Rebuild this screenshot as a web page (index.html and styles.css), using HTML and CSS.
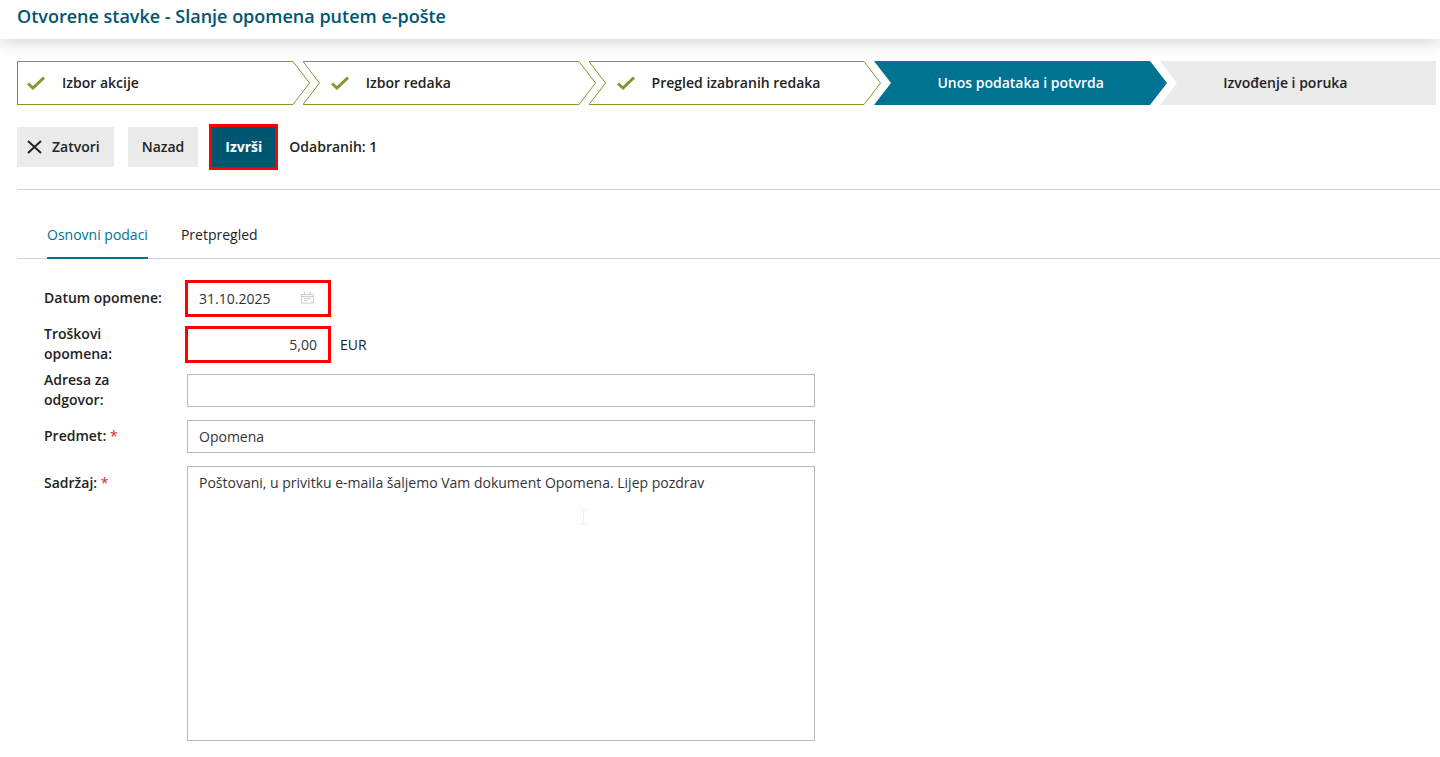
FILE: index.html
```html
<!DOCTYPE html>
<html lang="hr">
<head>
  <meta charset="UTF-8" />
  <meta name="viewport" content="width=device-width, initial-scale=1" />
  <title>Otvorene stavke - Slanje opomena putem e-pošte</title>
  <link rel="stylesheet" href="styles.css">
</head>
<body>

  <header class="page-header">
    <h1>Otvorene stavke - Slanje opomena putem e-pošte</h1>
  </header>

  <main class="page">
    <!-- Wizard steps -->
    <ol class="steps">
      <li class="step done first">
        <svg class="check" width="20" height="16" viewBox="0 0 20 16"><path d="M2 8.500l5 4.500L18 2.500" /></svg>
        <span>Izbor akcije</span>
        <svg class="tip" width="18" height="44" viewBox="0 0 18 44"><path d="M0 .5L16.500 22L0 43.500" /></svg>
      </li>
      <li class="step done">
        <svg class="notch" width="18" height="44" viewBox="0 0 18 44"><path d="M0 .5L16.500 22L0 43.500" /></svg>
        <svg class="check" width="20" height="16" viewBox="0 0 20 16"><path d="M2 8.500l5 4.500L18 2.500" /></svg>
        <span>Izbor redaka</span>
        <svg class="tip" width="18" height="44" viewBox="0 0 18 44"><path d="M0 .5L16.500 22L0 43.500" /></svg>
      </li>
      <li class="step done">
        <svg class="notch" width="18" height="44" viewBox="0 0 18 44"><path d="M0 .5L16.500 22L0 43.500" /></svg>
        <svg class="check" width="20" height="16" viewBox="0 0 20 16"><path d="M2 8.500l5 4.500L18 2.500" /></svg>
        <span>Pregled izabranih redaka</span>
        <svg class="tip" width="18" height="44" viewBox="0 0 18 44"><path d="M0 .5L16.500 22L0 43.500" /></svg>
      </li>
      <li class="step current" aria-current="step">
        <svg class="notch" width="18" height="44" viewBox="0 0 18 44"><path d="M0 0L17 22L0 44z" /></svg>
        <span>Unos podataka i potvrda</span>
        <svg class="tip" width="18" height="44" viewBox="0 0 18 44"><path d="M0 0L17 22L0 44z" /></svg>
      </li>
      <li class="step next">
        <svg class="notch" width="18" height="44" viewBox="0 0 18 44"><path d="M0 0L17 22L0 44z" /></svg>
        <span>Izvođenje i poruka</span>
      </li>
    </ol>

    <!-- Buttons -->
    <div class="toolbar">
      <button class="btn btn-close" type="button">
        <svg width="15" height="14" viewBox="0 0 15 14"><path d="M1 1l13 12M14 1L1 13" /></svg>
        Zatvori
      </button>
      <button class="btn" type="button">Nazad</button>
      <button class="btn btn-primary marked" type="submit" form="reminder">Izvrši</button>
      <span class="selected">Odabranih: 1</span>
    </div>

    <!-- Tabs -->
    <nav class="tabs">
      <a class="tab active" href="#reminder">Osnovni podaci</a>
      <a class="tab" href="#preview">Pretpregled</a>
    </nav>

    <form class="form" id="reminder">
      <label for="date">Datum opomene:</label>
      <div class="field">
        <div class="date-box">
          <input class="short marked" id="date" type="text" value="31.10.2025">
          <svg class="calendar" width="13" height="12" viewBox="0 0 13 12"><path d="M.5 2.500h12v8.500H.5zM.5 4.500h12M3.500 0v3M9.500 0v3M3 6.500h7M3 8.500h4" /></svg>
        </div>
      </div>

      <label for="costs">Troškovi opomena:</label>
      <div class="field">
        <input class="short amount marked" id="costs" type="text" value="5,00">
        <span>EUR</span>
      </div>

      <label for="reply">Adresa za odgovor:</label>
      <div class="field">
        <input id="reply" type="text">
      </div>

      <label for="subject">Predmet: <span class="required">*</span></label>
      <div class="field">
        <input id="subject" type="text" value="Opomena">
      </div>

      <label class="top" for="message">Sadržaj: <span class="required">*</span></label>
      <div class="field">
        <textarea id="message">Poštovani, u privitku e-maila šaljemo Vam dokument Opomena. Lijep pozdrav</textarea>
        <svg class="pointer" width="7" height="16" viewBox="0 0 7 16"><path d="M0 .5h3M4 .5h3M3.500 1v14M0 15.500h3M4 15.500h3" /></svg>
      </div>
    </form>
  </main>

</body>
</html>
```

FILE: styles.css
```css
/* Basic reset */
* {
  margin: 0;
  padding: 0;
  box-sizing: border-box;
}

body {
  font-family: "Open Sans", "Noto Sans", sans-serif;
  font-size: 14px;
  line-height: 20px;
  color: #222;
  background: #fff;
}

svg {
  display: block;
  flex: none;
  fill: none;
}

.page-header {
  height: 39px;
  padding: 4px 17px;
  box-shadow: 0 4px 16px rgba(0, 0, 0, 0.16);
}

.page-header h1 {
  font-size: 18px;
  line-height: 24px;
  font-weight: 600;
  color: #005670;
}

.page {
  padding: 22px 0 16px 17px;
}

/* Wizard steps */
.steps {
  display: grid;
  grid-template-columns: repeat(5, minmax(0, 1fr));
  gap: 10px;
  margin-right: 4px;
  list-style: none;
}

.step {
  position: relative;
  display: flex;
  align-items: center;
  height: 44px;
  padding-left: 63px;
  font-weight: 600;
}

.tip,
.notch {
  position: absolute;
  top: 0;
  z-index: 1;
}

.tip {
  left: 100%;
}

.notch {
  left: 0;
}

.done {
  gap: 16px;
  padding-left: 27px;
  background: linear-gradient(#83962a, #83962a) top / 100% 1px no-repeat,
    linear-gradient(#83962a, #83962a) bottom / 100% 1px no-repeat;
}

.done.first {
  padding-left: 8px;
  border-left: 1px solid #83962a;
}

.done .tip,
.done .notch {
  stroke: #83962a;
}

.check {
  stroke: #83962a;
  stroke-width: 3;
}

.current {
  color: #fff;
  background: #007292;
}

.current .tip {
  z-index: 2;
  fill: #007292;
}

.next {
  background: #ebebeb;
}

.current .notch,
.next .notch {
  z-index: 0;
  fill: #fff;
}

/* Toolbar */
.toolbar {
  display: flex;
  align-items: center;
  gap: 14px;
  padding: 22px 0;
  border-bottom: 1px solid #d0d0d0;
}

.btn {
  display: flex;
  align-items: center;
  gap: 10px;
  height: 40px;
  padding: 0 14px;
  font: inherit;
  font-weight: 600;
  color: #222;
  background: #ebebeb;
  border: none;
  cursor: pointer;
}

.btn-close {
  padding-left: 10px;
}

.btn-close svg {
  stroke: #222;
  stroke-width: 2;
}

.btn-primary {
  padding: 0 13px;
  font-weight: 700;
  color: #fff;
  background: #005670;
}

.marked {
  outline: 3px solid #f00;
}

.selected {
  font-weight: 600;
}

/* Tabs */
.tabs {
  display: flex;
  gap: 33px;
  margin-top: 24px;
  padding-left: 30px;
  border-bottom: 1px solid #d0d0d0;
}

.tab {
  margin-bottom: -1px;
  padding: 11px 0 12px;
  border-bottom: 2px solid transparent;
  color: #222;
  text-decoration: none;
}

.tab.active {
  color: #007292;
  border-color: #007292;
}

/* Form */
.form {
  display: grid;
  grid-template-columns: 120px minmax(0, 628px);
  gap: 13px 23px;
  padding: 23px 27px 0;
}

.form label {
  align-self: center;
  margin: -5px 0;
  padding-bottom: 2px;
  font-weight: 600;
}

.form label.top {
  align-self: start;
  margin-top: 7px;
}

.required {
  color: #d9252a;
  font-weight: 400;
}

.field {
  position: relative;
  display: flex;
  align-items: center;
  gap: 11px;
}

.field input,
.field textarea {
  width: 100%;
  height: 33px;
  padding: 0 11px;
  font: inherit;
  color: #333;
  background: #fff;
  border: 1px solid #b9b9b9;
  border-radius: 0;
}

.field textarea {
  height: 275px;
  padding-top: 6px;
  resize: none;
}

.field .short {
  width: 142px;
  outline-offset: -1px;
}

.field .amount {
  text-align: right;
}

.date-box {
  position: relative;
}

.calendar {
  position: absolute;
  top: 10px;
  right: 15px;
  stroke: #ccc;
}

.pointer {
  position: absolute;
  top: 43px;
  left: 393px;
  stroke: #eee;
}
```
